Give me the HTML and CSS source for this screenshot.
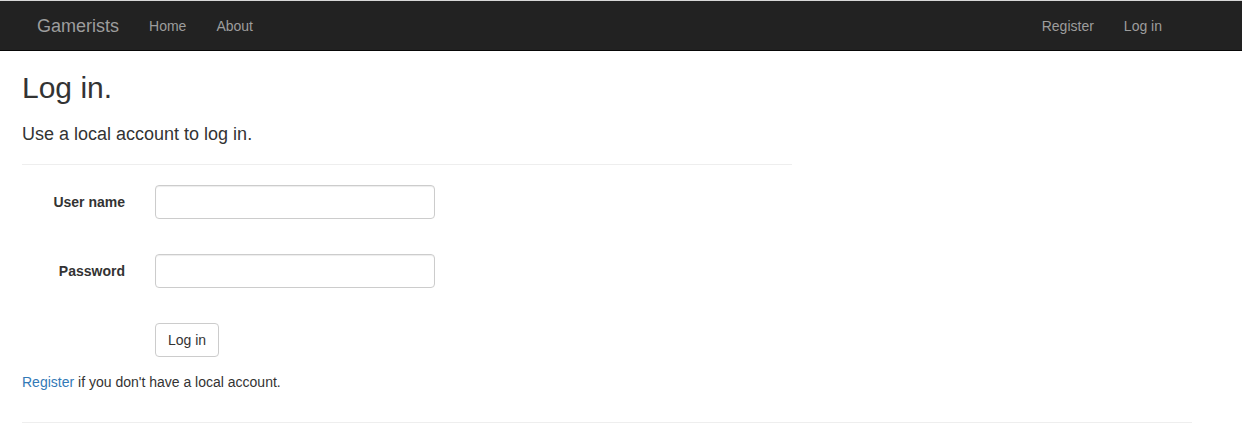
FILE: index.html
```html
<!DOCTYPE html>
<html>
<head>
<meta charset="utf-8">
<title>Log in - Gamerists</title>
<link rel="stylesheet" href="styles.css">
</head>
<body>
<div class="topline"></div>
<nav class="navbar">
  <div class="nav-container">
    <div class="nav-left">
      <a class="brand" href="#">Gamerists</a>
      <a class="nav-link" href="#">Home</a>
      <a class="nav-link" href="#">About</a>
    </div>
    <div class="nav-right">
      <a class="nav-link" href="#">Register</a>
      <a class="nav-link last" href="#">Log in</a>
    </div>
  </div>
</nav>
<main class="body-content">
  <section class="login-col">
    <h2 class="title">Log in.</h2>
    <h4 class="subtitle">Use a local account to log in.</h4>
    <hr class="rule">
    <form class="form-horizontal">
      <div class="form-group">
        <label class="control-label" for="user">User name</label>
        <div class="field">
          <input class="form-control" id="user" type="text">
          <span class="validation"></span>
        </div>
      </div>
      <div class="form-group">
        <label class="control-label" for="pass">Password</label>
        <div class="field">
          <input class="form-control" id="pass" type="password">
          <span class="validation"></span>
        </div>
      </div>
      <div class="form-group">
        <span class="control-label"></span>
        <div class="field">
          <button class="btn" type="button">Log in</button>
        </div>
      </div>
    </form>
    <p class="register"><a href="#">Register</a> if you don't have a local account.</p>
  </section>
  <hr class="footer-rule">
</main>
</body>
</html>
```

FILE: styles.css
```css
* { box-sizing: border-box; }
html, body { margin: 0; padding: 0; }
body {
  font-family: "Liberation Sans", Arial, Helvetica, sans-serif;
  font-size: 14px;
  line-height: 20px;
  color: #333;
  background: #fff;
}
a { color: #337ab7; text-decoration: none; }

.topline { height: 1px; background: #d8d8d8; }
.navbar {
  height: 50px;
  background: #222;
  border-bottom: 1px solid #080808;
}
.nav-container {
  margin-left: 22px;
  width: 1170px;
  padding: 0 15px;
  display: flex;
  justify-content: space-between;
}
.nav-left, .nav-right { display: flex; }
.brand {
  font-size: 18px;
  line-height: 20px;
  padding: 15px 15px 14px 0;
  color: #9d9d9d;
}
.nav-link {
  color: #9d9d9d;
  padding: 15px 15px 14px;
  line-height: 20px;
}
.nav-link.last { padding-right: 15px; }

.body-content { padding: 0 50px 0 22px; width: 1220px; }
.login-col { width: 770px; display: flow-root; }
.title {
  font-size: 30px;
  line-height: 33px;
  font-weight: 500;
  margin: 20px 0 10px;
}
.subtitle {
  font-size: 18px;
  line-height: 20px;
  font-weight: 500;
  margin: 20px 0 10px;
}
.rule, .footer-rule {
  border: 0;
  border-top: 1px solid #eee;
  margin: 20px 0;
  height: 0;
}
.footer-rule { width: 1170px; }

.form-group {
  display: flex;
  margin-bottom: 15px;
}
.control-label {
  width: 103px;
  flex: none;
  text-align: right;
  font-weight: 700;
  padding-top: 7px;
  line-height: 20px;
}
.field {
  margin-left: 30px;
  display: flex;
  flex-direction: column;
  align-items: flex-start;
}
.form-control {
  width: 280px;
  height: 34px;
  padding: 6px 12px;
  font-size: 14px;
  font-family: inherit;
  border: 1px solid #ccc;
  border-radius: 4px;
  box-shadow: inset 0 1px 1px rgba(0,0,0,.075);
  background: #fff;
  margin: 0;
}
.validation { display: block; height: 20px; }
.btn {
  height: 34px;
  padding: 6px 12px;
  font-size: 14px;
  line-height: 20px;
  font-family: inherit;
  color: #333;
  background: #fff;
  border: 1px solid #ccc;
  border-radius: 4px;
  white-space: nowrap;
}
.register { margin: 0 0 10px; }
```
